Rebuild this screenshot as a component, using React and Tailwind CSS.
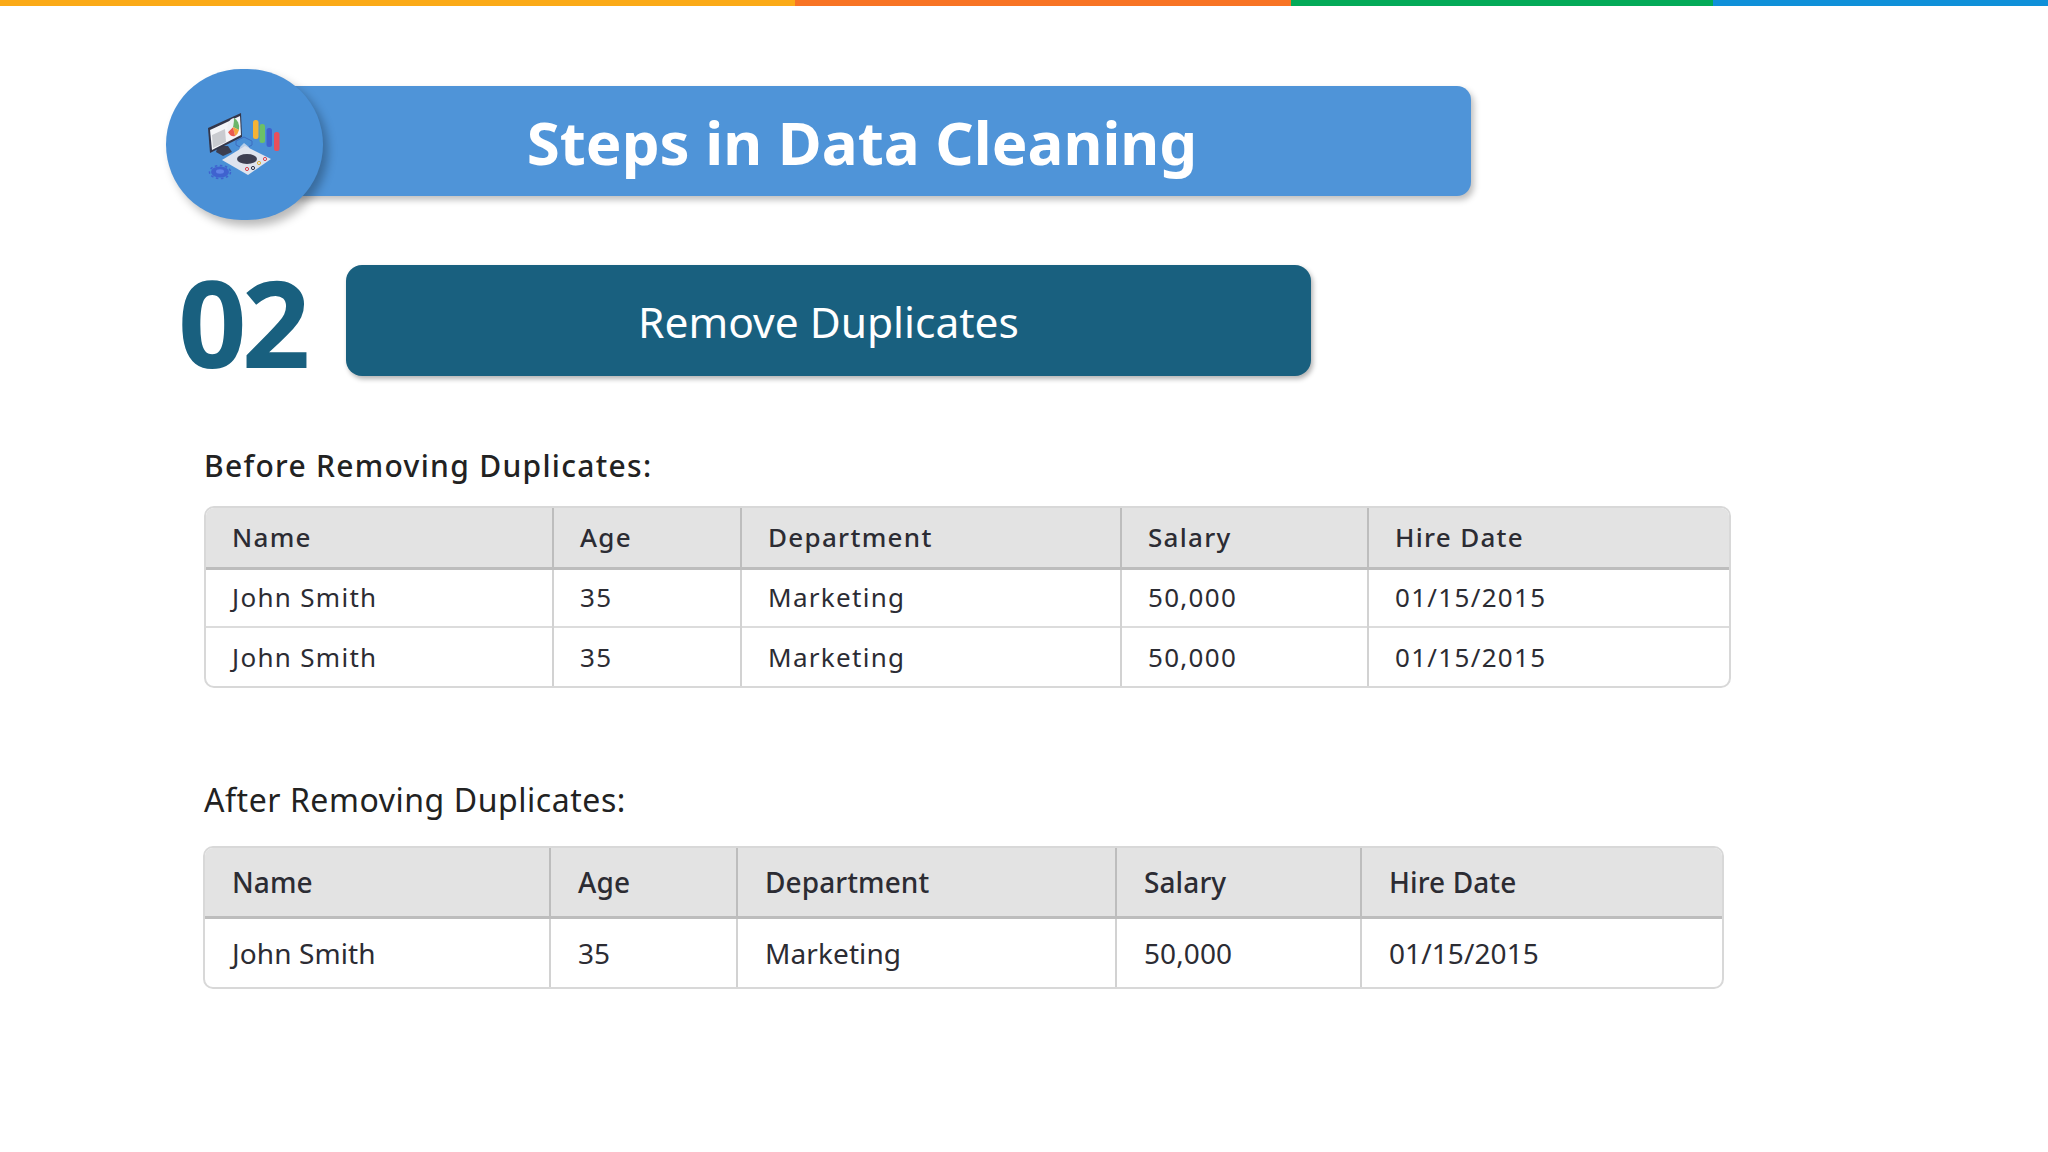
const font = { fontFamily: '"Noto Sans", sans-serif' }

const before = [
  ['John Smith', '35', 'Marketing', '50,000', '01/15/2015'],
  ['John Smith', '35', 'Marketing', '50,000', '01/15/2015'],
]
const after = [['John Smith', '35', 'Marketing', '50,000', '01/15/2015']]
const heads = ['Name', 'Age', 'Department', 'Salary', 'Hire Date']

function DataIcon() {
  return (
    <svg width="110" height="90" viewBox="0 0 110 90" className="blur-[0.6px]">
      {/* monitor */}
      <polygon points="28,46 38,46 42,52 33,56 26,52" fill="#3b3e50" />
      <polygon points="18,28 51,13 52,37 20,53" fill="#33364a" />
      <polygon points="20,30 50,16 51,35 22,50" fill="#f4f5f8" />
      <polygon points="22,35 35,29 36,42 23,48" fill="#c9cbd0" />
      <path d="M44 18 A7 10 0 0 1 49 30 L43 27 Z" fill="#6bb56a" />
      <path d="M43 27 L49 30 A7 10 0 0 1 45 36 Z" fill="#f3a63c" />
      <path d="M43 27 L45 36 A7 10 0 0 1 38 32 Z" fill="#e95a4f" />
      <path d="M43 27 L38 32 A7 10 0 0 1 44 18 Z" fill="#eef0f4" />
      {/* bars */}
      <rect x="63" y="20" width="5.5" height="19" rx="2.5" fill="#f5b335" />
      <rect x="69.5" y="24" width="5.5" height="19" rx="2.5" fill="#6cc067" />
      <rect x="76.5" y="28" width="5.5" height="19" rx="2.5" fill="#3f62cf" />
      <rect x="84" y="32" width="5.5" height="19" rx="2.5" fill="#ea4f5b" />
      {/* network */}
      <path d="M46 41 L54 37 L62 41 L62 45 L54 49 L46 45 Z" fill="none" stroke="#3d6cc0" strokeWidth="1" />
      <path d="M50 47 L54 43 L59 47 L61 54 L48 54 Z" fill="#dfe4ee" opacity="0.75" />
      {/* base plate */}
      <polygon points="32,60 55,46 81,59 58,75" fill="#dfe4ee" />
      <ellipse cx="57" cy="59" rx="10" ry="5" fill="#3d3f52" />
      <circle cx="57" cy="69" r="1.6" fill="none" stroke="#d9434f" strokeWidth="1" />
      <circle cx="63" cy="68" r="1.6" fill="none" stroke="#33364a" strokeWidth="1" />
      <circle cx="69" cy="63" r="1.6" fill="none" stroke="#e2b23a" strokeWidth="1" />
      <circle cx="75" cy="59" r="1.6" fill="none" stroke="#d9434f" strokeWidth="1" />
      {/* gear */}
      <ellipse cx="30" cy="72" rx="9" ry="5.5" fill="#3f62cf" />
      <ellipse cx="30" cy="72" rx="10.5" ry="6.5" fill="none" stroke="#3f62cf" strokeWidth="1.5" strokeDasharray="2.5 2.5" />
      <ellipse cx="30" cy="71.5" rx="4" ry="2.2" fill="#5f83e6" />
    </svg>
  )
}

function DataTable({ rows, tall, cols, width }) {
  const headH = tall ? 'h-[69px]' : 'h-[60px]'
  const rowH = tall ? 'h-[70px]' : 'h-[59px]'
  const size = tall ? 'text-[28px] tracking-[0.1px]' : 'text-[26px] tracking-[1.3px]'
  const pad = tall ? 'pl-[27px]' : 'pl-[26px]'

  return (
    <div className={`${width} overflow-hidden rounded-[10px] border-2 border-[#d8d8d8]`}>
      <table className={`w-full table-fixed border-collapse ${size} text-[#2c2c33]`}>
        <colgroup>
          {cols.map((c) => (
            <col key={c} style={{ width: c }} />
          ))}
        </colgroup>
        <thead>
          <tr className={`${headH} bg-[#e3e3e3]`}>
            {heads.map((h, i) => (
              <th
                key={h}
                className={`border-b-[3px] border-[#bdbdbd] ${pad} text-left font-medium ${i > 0 ? 'border-l-2' : ''}`}
              >
                {h}
              </th>
            ))}
          </tr>
        </thead>
        <tbody>
          {rows.map((row, r) => (
            <tr key={r} className={`${rowH} ${r > 0 ? 'border-t-2 border-[#dcdcdc]' : ''}`}>
              {row.map((v, i) => (
                <td key={i} className={`${pad} font-normal ${i > 0 ? 'border-l-2 border-[#d2d2d2]' : ''}`}>
                  {v}
                </td>
              ))}
            </tr>
          ))}
        </tbody>
      </table>
    </div>
  )
}

export default function App() {
  return (
    <div className="h-[1152px] w-[2048px] overflow-hidden bg-white" style={font}>
      <div className="flex h-[6px]">
        <div className="w-[795px] bg-[#fbaa17]" />
        <div className="w-[496px] bg-[#f87424]" />
        <div className="w-[422px] bg-[#04aa58]" />
        <div className="flex-1 bg-[#0f90d9]" />
      </div>

      <div className="ml-[166px] mt-[63px] flex h-[151px] items-center">
        <div className="relative z-10 flex h-[151px] w-[157px] shrink-0 items-center justify-center rounded-full bg-[#4a90d6] shadow-[5px_6px_10px_rgba(0,0,0,0.28)]">
          <DataIcon />
        </div>
        <div className="mb-[7px] ml-[-70px] flex h-[110px] w-[1218px] items-center justify-center rounded-[14px] bg-[#4f94d8] pt-[2px] shadow-[3px_4px_6px_rgba(0,0,0,0.25)]">
          <h1 className="text-[60px] font-bold text-white">Steps in Data Cleaning</h1>
        </div>
      </div>

      <div className="ml-[178px] mt-[45px] flex h-[111px] items-center">
        <div className="w-[168px] pt-[3px] text-[120px] font-bold leading-none tracking-[-5px] text-[#19607f]">02</div>
        <div className="flex h-[111px] w-[965px] items-center justify-center rounded-[16px] bg-[#19607f] pt-[3px] shadow-[2px_3px_5px_rgba(0,0,0,0.3)]">
          <h2 className="text-[42.5px] font-normal text-white">Remove Duplicates</h2>
        </div>
      </div>

      <div className="ml-[204px]">
        <h3 className="mt-[67px] h-[46px] text-[30px] font-medium leading-[46px] tracking-[1.3px] text-[#222]">Before Removing Duplicates:</h3>
        <div className="mt-[17px]">
          <DataTable rows={before} cols={['347px', '188px', '380px', '247px', '365px']} width="w-[1527px]" />
        </div>
        <h3 className="mt-[89px] h-[46px] text-[32px] font-normal leading-[46px] tracking-[0.55px] text-[#222]">After Removing Duplicates:</h3>
        <div className="ml-[-1px] mt-[23px]">
          <DataTable rows={after} tall cols={['345px', '187px', '379px', '245px', '365px']} width="w-[1521px]" />
        </div>
      </div>
    </div>
  )
}
